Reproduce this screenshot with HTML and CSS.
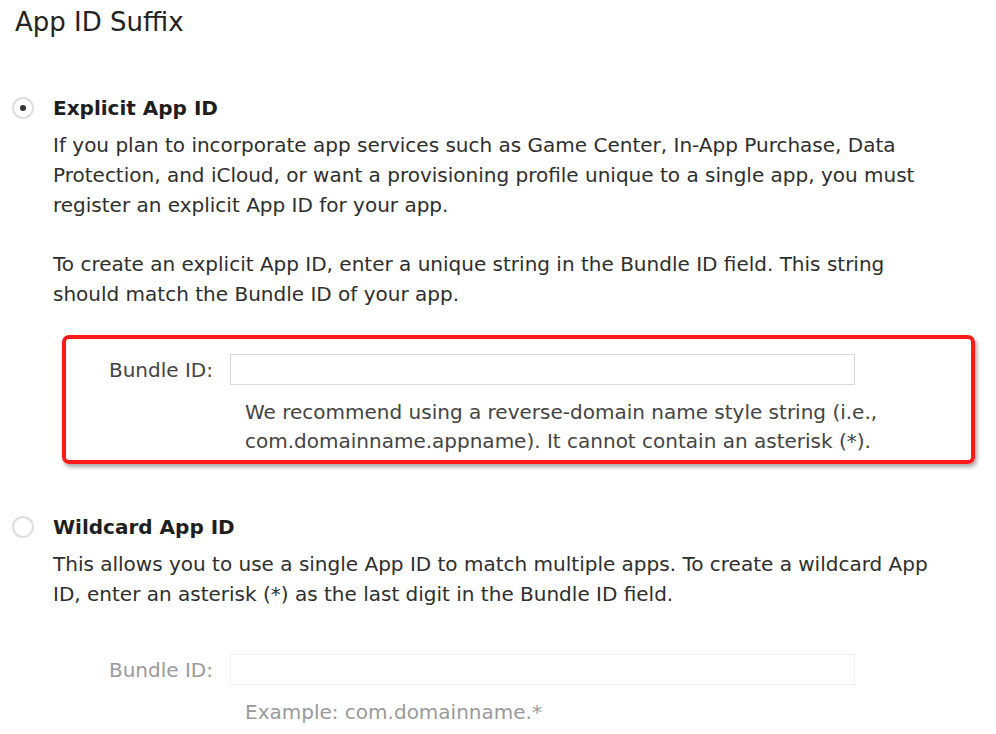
FILE: index.html
```html
<!DOCTYPE html>
<html>
<head>
<meta charset="utf-8">
<link rel="stylesheet" href="styles.css">
</head>
<body>
<div class="page">
  <h1 class="title">App ID Suffix</h1>

  <section class="option">
    <div class="option-head">
      <span class="radio checked"></span>
      <span class="option-label">Explicit App ID</span>
    </div>
    <div class="option-body">
      <p class="desc">If you plan to incorporate app services such as Game Center, In-App Purchase, Data Protection, and iCloud, or want a provisioning profile unique to a single app, you must register an explicit App ID for your app.</p>
      <p class="desc">To create an explicit App ID, enter a unique string in the Bundle ID field. This string should match the Bundle ID of your app.</p>
    </div>
    <div class="field highlight">
      <div class="field-row">
        <label class="field-label">Bundle ID:</label>
        <div class="input"></div>
      </div>
      <p class="help">We recommend using a reverse-domain name style string (i.e., com.domainname.appname). It cannot contain an asterisk (*).</p>
    </div>
  </section>

  <section class="option wildcard">
    <div class="option-head">
      <span class="radio"></span>
      <span class="option-label">Wildcard App ID</span>
    </div>
    <div class="option-body">
      <p class="desc">This allows you to use a single App ID to match multiple apps. To create a wildcard App ID, enter an asterisk (*) as the last digit in the Bundle ID field.</p>
    </div>
    <div class="field disabled">
      <div class="field-row">
        <label class="field-label">Bundle ID:</label>
        <div class="input"></div>
      </div>
      <p class="help">Example: com.domainname.*</p>
    </div>
  </section>
</div>
</body>
</html>
```

FILE: styles.css
```css
html, body {
  margin: 0;
  padding: 0;
  background: #ffffff;
}

body {
  font-family: "DejaVu Sans", "Liberation Sans", sans-serif;
  color: #333333;
  width: 996px;
  height: 734px;
  overflow: hidden;
}

.page {
  padding: 0 0 0 12px;
}

.title {
  margin: 0;
  padding-left: 3px;
  font-size: 26px;
  font-weight: normal;
  line-height: 44px;
  color: #222222;
}

.option {
  margin-top: 49px;
}

.option.wildcard {
  margin-top: 48px;
}

.option-head {
  display: flex;
  align-items: center;
  height: 30px;
}

.radio {
  width: 18px;
  height: 18px;
  border: 2px solid #dedede;
  border-radius: 50%;
  box-sizing: content-box;
  display: flex;
  align-items: center;
  justify-content: center;
  margin-right: 19px;
  flex: none;
}

.radio.checked::after {
  content: "";
  width: 6px;
  height: 6px;
  border-radius: 50%;
  background: #333;
}

.option-label {
  font-weight: bold;
  font-size: 20px;
  color: #1e1e1e;
}

.option-body {
  padding-left: 41px;
  margin-top: 7px;
}

.desc {
  margin: 0 0 29px 0;
  font-size: 20px;
  line-height: 30px;
  width: 890px;
  color: #2e2e2e;
}

.option-body .desc:last-child {
  margin-bottom: 0;
}

.field {
  margin-top: 26px;
  margin-left: 50px;
  width: 905px;
  border: 4px solid transparent;
  border-radius: 7px;
  padding: 15px 0 4px 0;
}

.field.highlight {
  border-color: #ff1a1a;
  box-shadow: 2px 3px 4px rgba(0, 0, 0, 0.35);
}

.field-row {
  display: flex;
  align-items: center;
}

.field-label {
  width: 147px;
  text-align: right;
  margin-right: 17px;
  font-size: 20px;
  color: #444;
}

.input {
  width: 623px;
  height: 29px;
  border: 1px solid #d8d8d8;
  background: #fff;
}

.help {
  margin: 13px 0 0 179px;
  font-size: 20px;
  line-height: 29px;
  color: #444;
}

.disabled .field-label,
.disabled .help {
  color: #9a9a9a;
}

.disabled .input {
  border-color: #f0f0f0;
}
```
